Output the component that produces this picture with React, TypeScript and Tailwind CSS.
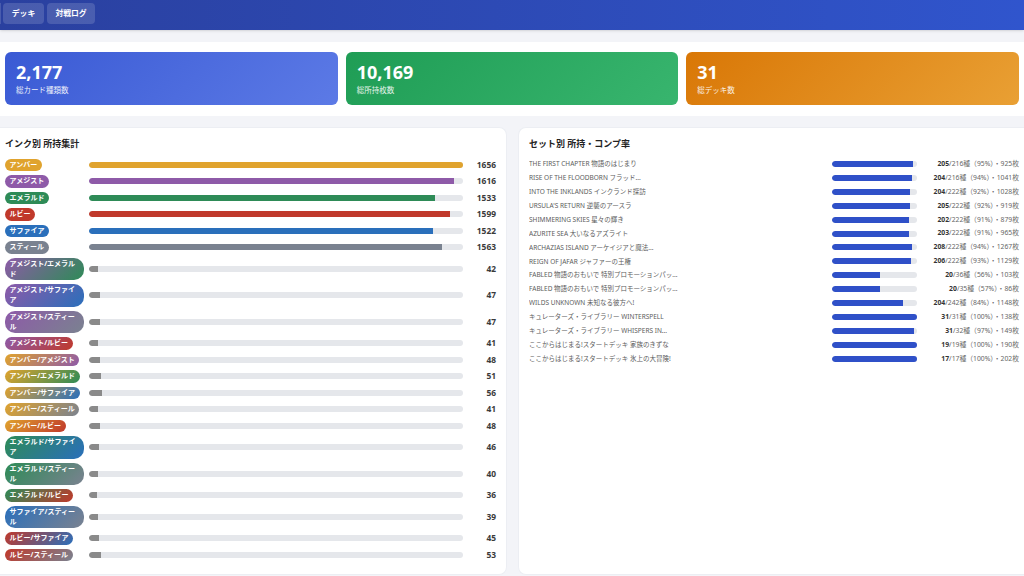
const MAX_INK = 1656

const inks = [
  { label: "アンバー", value: 1656, pill: "bg-[#e0a32e]", bar: "bg-[#e0a32e]" },
  { label: "アメジスト", value: 1616, pill: "bg-[#8e5aa8]", bar: "bg-[#8e5aa8]" },
  { label: "エメラルド", value: 1533, pill: "bg-[#2e8b57]", bar: "bg-[#2e8b57]" },
  { label: "ルビー", value: 1599, pill: "bg-[#c0392b]", bar: "bg-[#c0392b]" },
  { label: "サファイア", value: 1522, pill: "bg-[#2a6fbb]", bar: "bg-[#2a6fbb]" },
  { label: "スティール", value: 1563, pill: "bg-[#7a8290]", bar: "bg-[#7a8290]" },
  { label: "アメジスト/エメラルド", value: 42, pill: "bg-linear-135/srgb from-[#8e5aa8] to-[#2e8b57]" },
  { label: "アメジスト/サファイア", value: 47, pill: "bg-linear-135/srgb from-[#8e5aa8] to-[#2a6fbb]" },
  { label: "アメジスト/スティール", value: 47, pill: "bg-linear-135/srgb from-[#8e5aa8] to-[#7a8290]" },
  { label: "アメジスト/ルビー", value: 41, pill: "bg-linear-135/srgb from-[#8e5aa8] to-[#c0392b]" },
  { label: "アンバー/アメジスト", value: 48, pill: "bg-linear-135/srgb from-[#e0a32e] to-[#8e5aa8]" },
  { label: "アンバー/エメラルド", value: 51, pill: "bg-linear-135/srgb from-[#e0a32e] to-[#2e8b57]" },
  { label: "アンバー/サファイア", value: 56, pill: "bg-linear-135/srgb from-[#e0a32e] to-[#2a6fbb]" },
  { label: "アンバー/スティール", value: 41, pill: "bg-linear-135/srgb from-[#e0a32e] to-[#7a8290]" },
  { label: "アンバー/ルビー", value: 48, pill: "bg-linear-135/srgb from-[#e0a32e] to-[#c0392b]" },
  { label: "エメラルド/サファイア", value: 46, pill: "bg-linear-135/srgb from-[#2e8b57] to-[#2a6fbb]" },
  { label: "エメラルド/スティール", value: 40, pill: "bg-linear-135/srgb from-[#2e8b57] to-[#7a8290]" },
  { label: "エメラルド/ルビー", value: 36, pill: "bg-linear-135/srgb from-[#2e8b57] to-[#c0392b]" },
  { label: "サファイア/スティール", value: 39, pill: "bg-linear-135/srgb from-[#2a6fbb] to-[#7a8290]" },
  { label: "ルビー/サファイア", value: 45, pill: "bg-linear-135/srgb from-[#c0392b] to-[#2a6fbb]" },
  { label: "ルビー/スティール", value: 53, pill: "bg-linear-135/srgb from-[#c0392b] to-[#7a8290]" },
]

const sets = [
  { name: "THE FIRST CHAPTER 物語のはじまり", have: 205, total: 216, pct: 95, cards: 925 },
  { name: "RISE OF THE FLOODBORN フラッド...", have: 204, total: 216, pct: 94, cards: 1041 },
  { name: "INTO THE INKLANDS インクランド探訪", have: 204, total: 222, pct: 92, cards: 1028 },
  { name: "URSULA'S RETURN 逆襲のアースラ", have: 205, total: 222, pct: 92, cards: 919 },
  { name: "SHIMMERING SKIES 星々の輝き", have: 202, total: 222, pct: 91, cards: 879 },
  { name: "AZURITE SEA 大いなるアズライト", have: 203, total: 222, pct: 91, cards: 965 },
  { name: "ARCHAZIAS ISLAND アーケイジアと魔法...", have: 208, total: 222, pct: 94, cards: 1267 },
  { name: "REIGN OF JAFAR ジャファーの王権", have: 206, total: 222, pct: 93, cards: 1129 },
  { name: "FABLED 物語のおもいで 特別プロモーションパッ...", have: 20, total: 36, pct: 56, cards: 103 },
  { name: "FABLED 物語のおもいで 特別プロモーションパッ...", have: 20, total: 35, pct: 57, cards: 86 },
  { name: "WILDS UNKNOWN 未知なる彼方へ!", have: 204, total: 242, pct: 84, cards: 1148 },
  { name: "キュレーターズ・ライブラリー WINTERSPELL", have: 31, total: 31, pct: 100, cards: 138 },
  { name: "キュレーターズ・ライブラリー WHISPERS IN...", have: 31, total: 32, pct: 97, cards: 149 },
  { name: "ここからはじまる!スタートデッキ 家族のきずな", have: 19, total: 19, pct: 100, cards: 190 },
  { name: "ここからはじまる!スタートデッキ 氷上の大冒険!", have: 17, total: 17, pct: 100, cards: 202 },
]

const stats = [
  { value: "2,177", label: "総カード種類数", color: "from-[#3a5ad4] to-[#5c7ae6]" },
  { value: "10,169", label: "総所持枚数", color: "from-[#1f9d55] to-[#38b56e]" },
  { value: "31", label: "総デッキ数", color: "from-[#d97706] to-[#e9a034]" },
]

export default function App() {
  return (
    <div className="h-[576px] w-[1024px] overflow-hidden bg-[#f3f4f8] font-['Noto_Sans','Noto_Sans_CJK_JP',sans-serif] text-[#333333]">
      <header className="flex h-[30px] items-start bg-gradient-to-r from-[#2a409f] to-[#3055cd] pt-[3px] shadow-sm">
        <span className="h-[21px] w-px bg-white/15" />
        <button className="ml-[2px] flex h-[21px] w-[41px] items-center justify-center rounded bg-white/15 text-[7.8px] font-bold text-white">
          デッキ
        </button>
        <button className="ml-[3px] flex h-[21px] w-[48px] items-center justify-center rounded bg-white/15 text-[7.8px] font-bold text-white">
          対戦ログ
        </button>
      </header>

      <section className="mt-[12px] grid h-[74px] grid-cols-3 gap-[8px] bg-white px-[5px] pt-[10px] pb-[11px]">
        {stats.map((s) => (
          <div key={s.label} className={`rounded-md bg-linear-135/srgb px-[11px] pt-[8px] text-white ${s.color}`}>
            <div className="text-[18px] leading-[24px] font-bold">{s.value}</div>
            <div className="mt-px text-[7.5px] leading-[10px] opacity-90">{s.label}</div>
          </div>
        ))}
      </section>

      <main className="mt-[11px] grid h-[448px] grid-cols-[507px_1fr] gap-[11px]">
        <section className="rounded-r-lg border-y border-r border-[#eceef3] bg-white pl-[5px] pr-[10px] pt-[10px]">
          <h2 className="mb-[8.5px] text-[9px] leading-[12px] font-bold text-[#222222]">インク別 所持集計</h2>
          <div className="flex flex-col gap-[4px]">
            {inks.map((ink) => (
              <div key={ink.label} className="grid grid-cols-[79px_374px_1fr] items-center gap-x-[5px]">
                <div className="flex">
                  <span className={`max-w-[79px] rounded-[10px] px-[4.5px] py-[1.25px] text-[7px] leading-[10px] font-bold text-white ${ink.pill}`}>
                    {ink.label}
                  </span>
                </div>
                <div className="h-[6px] overflow-hidden rounded-full bg-[#e5e7eb]">
                  <div
                    className={`h-full rounded-l-full rounded-r-[1px] ${ink.bar ?? "bg-[#8a8a8a]"}`}
                    style={{ width: `${(ink.value / MAX_INK) * 100}%` }}
                  />
                </div>
                <div className="text-right text-[8.4px] leading-[10px] font-bold text-[#3a3a3a]">{ink.value}</div>
              </div>
            ))}
          </div>
        </section>

        <section className="rounded-l-lg border-y border-l border-[#eceef3] bg-white pl-[10px] pr-[5px] pt-[10px]">
          <h2 className="mb-[7px] text-[9px] leading-[12px] font-bold text-[#222222]">セット別 所持・コンプ率</h2>
          <div className="flex flex-col">
            {sets.map((s, i) => (
              <div key={i} className="grid h-[13.93px] grid-cols-[303px_85px_1fr] items-center">
                <div className="truncate text-[6.5px] text-[#5c5c5c]">{s.name}</div>
                <div className="h-[6px] overflow-hidden rounded-full bg-[#e5e7eb]">
                  <div className="h-full rounded-l-full rounded-r-[1px] bg-[#2f50c8]" style={{ width: `${s.pct}%` }} />
                </div>
                <div className="text-right text-[6.8px] text-[#666666]">
                  <b className="text-[#333333]">{s.have}</b>/{s.total}種（{s.pct}%）・{s.cards}枚
                </div>
              </div>
            ))}
          </div>
        </section>
      </main>
    </div>
  )
}
